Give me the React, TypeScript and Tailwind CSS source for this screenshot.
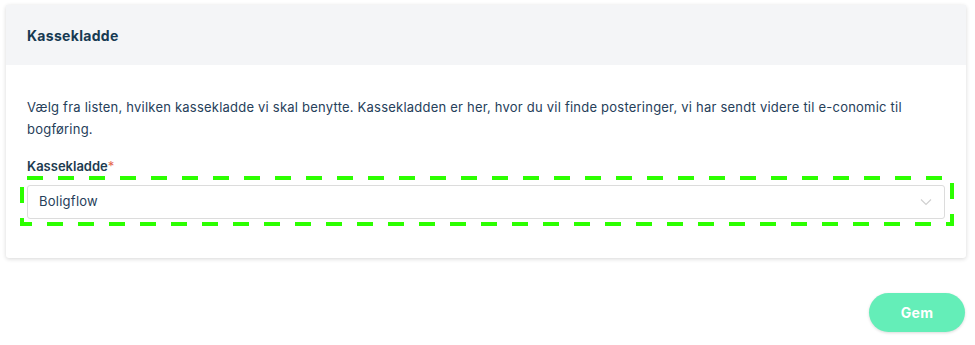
export default function App() {
  return (
    <div className="min-h-[345px] bg-white pl-[6px] pr-[9px] pt-[5px] font-['Inter','Noto_Sans',sans-serif] text-[#1d3b50]">
      <div className="rounded-[3px] bg-white shadow-[0_1px_4px_rgba(0,0,0,0.16)]">
        <div className="flex h-[60px] items-center bg-[#f4f5f7] px-[21px] text-[14px] font-bold tracking-[0.3px] text-[#173a52]">
          Kassekladde
        </div>
        <div className="px-[21px] pb-[39px] pt-[31px]">
          <p className="text-[13px] leading-[22px] tracking-[0.22px] text-[#26405a]">
            Vælg fra listen, hvilken kassekladde vi skal benytte. Kassekladden er her, hvor du vil finde posteringer, vi har sendt videre til e-conomic til bogføring.
          </p>
          <div className="mt-[17px] text-[13px] font-semibold leading-[18px] text-[#1d3b50]">
            Kassekladde<span className="font-normal text-[#e5674f]">*</span>
          </div>
          <div className="relative mt-[10px]">
            <div className="flex h-[34px] items-center justify-between rounded-[3px] border border-[#dcdcdc] bg-white pl-[11px] pr-[12px] text-[13px] tracking-[0.25px] text-[#26405a]">
              <span>Boligflow</span>
              <svg width="12" height="8" viewBox="0 0 12 8" fill="none" stroke="#d0d0d0" strokeWidth="1.2">
                <path d="M1 1.5l5 5 5-5" />
              </svg>
            </div>
            <svg className="pointer-events-none absolute -bottom-[7px] -left-[7px] -right-[9px] -top-[9px] h-[calc(100%+16px)] w-[calc(100%+16px)]">
              <rect x="2" y="2" fill="none" stroke="#2cff00" strokeWidth="4" strokeDasharray="16 15" strokeDashoffset="26" style={{ width: "calc(100% - 4px)", height: "calc(100% - 4px)" }} />
            </svg>
          </div>
        </div>
      </div>
      <div className="mt-[35px] flex justify-end">
        <button className="mr-[1px] h-[39px] w-[96px] rounded-full bg-[#64eeb8] text-[14px] font-bold tracking-[0.3px] text-white shadow-[0_1px_3px_rgba(0,0,0,0.15)]">
          Gem
        </button>
      </div>
    </div>
  );
}
